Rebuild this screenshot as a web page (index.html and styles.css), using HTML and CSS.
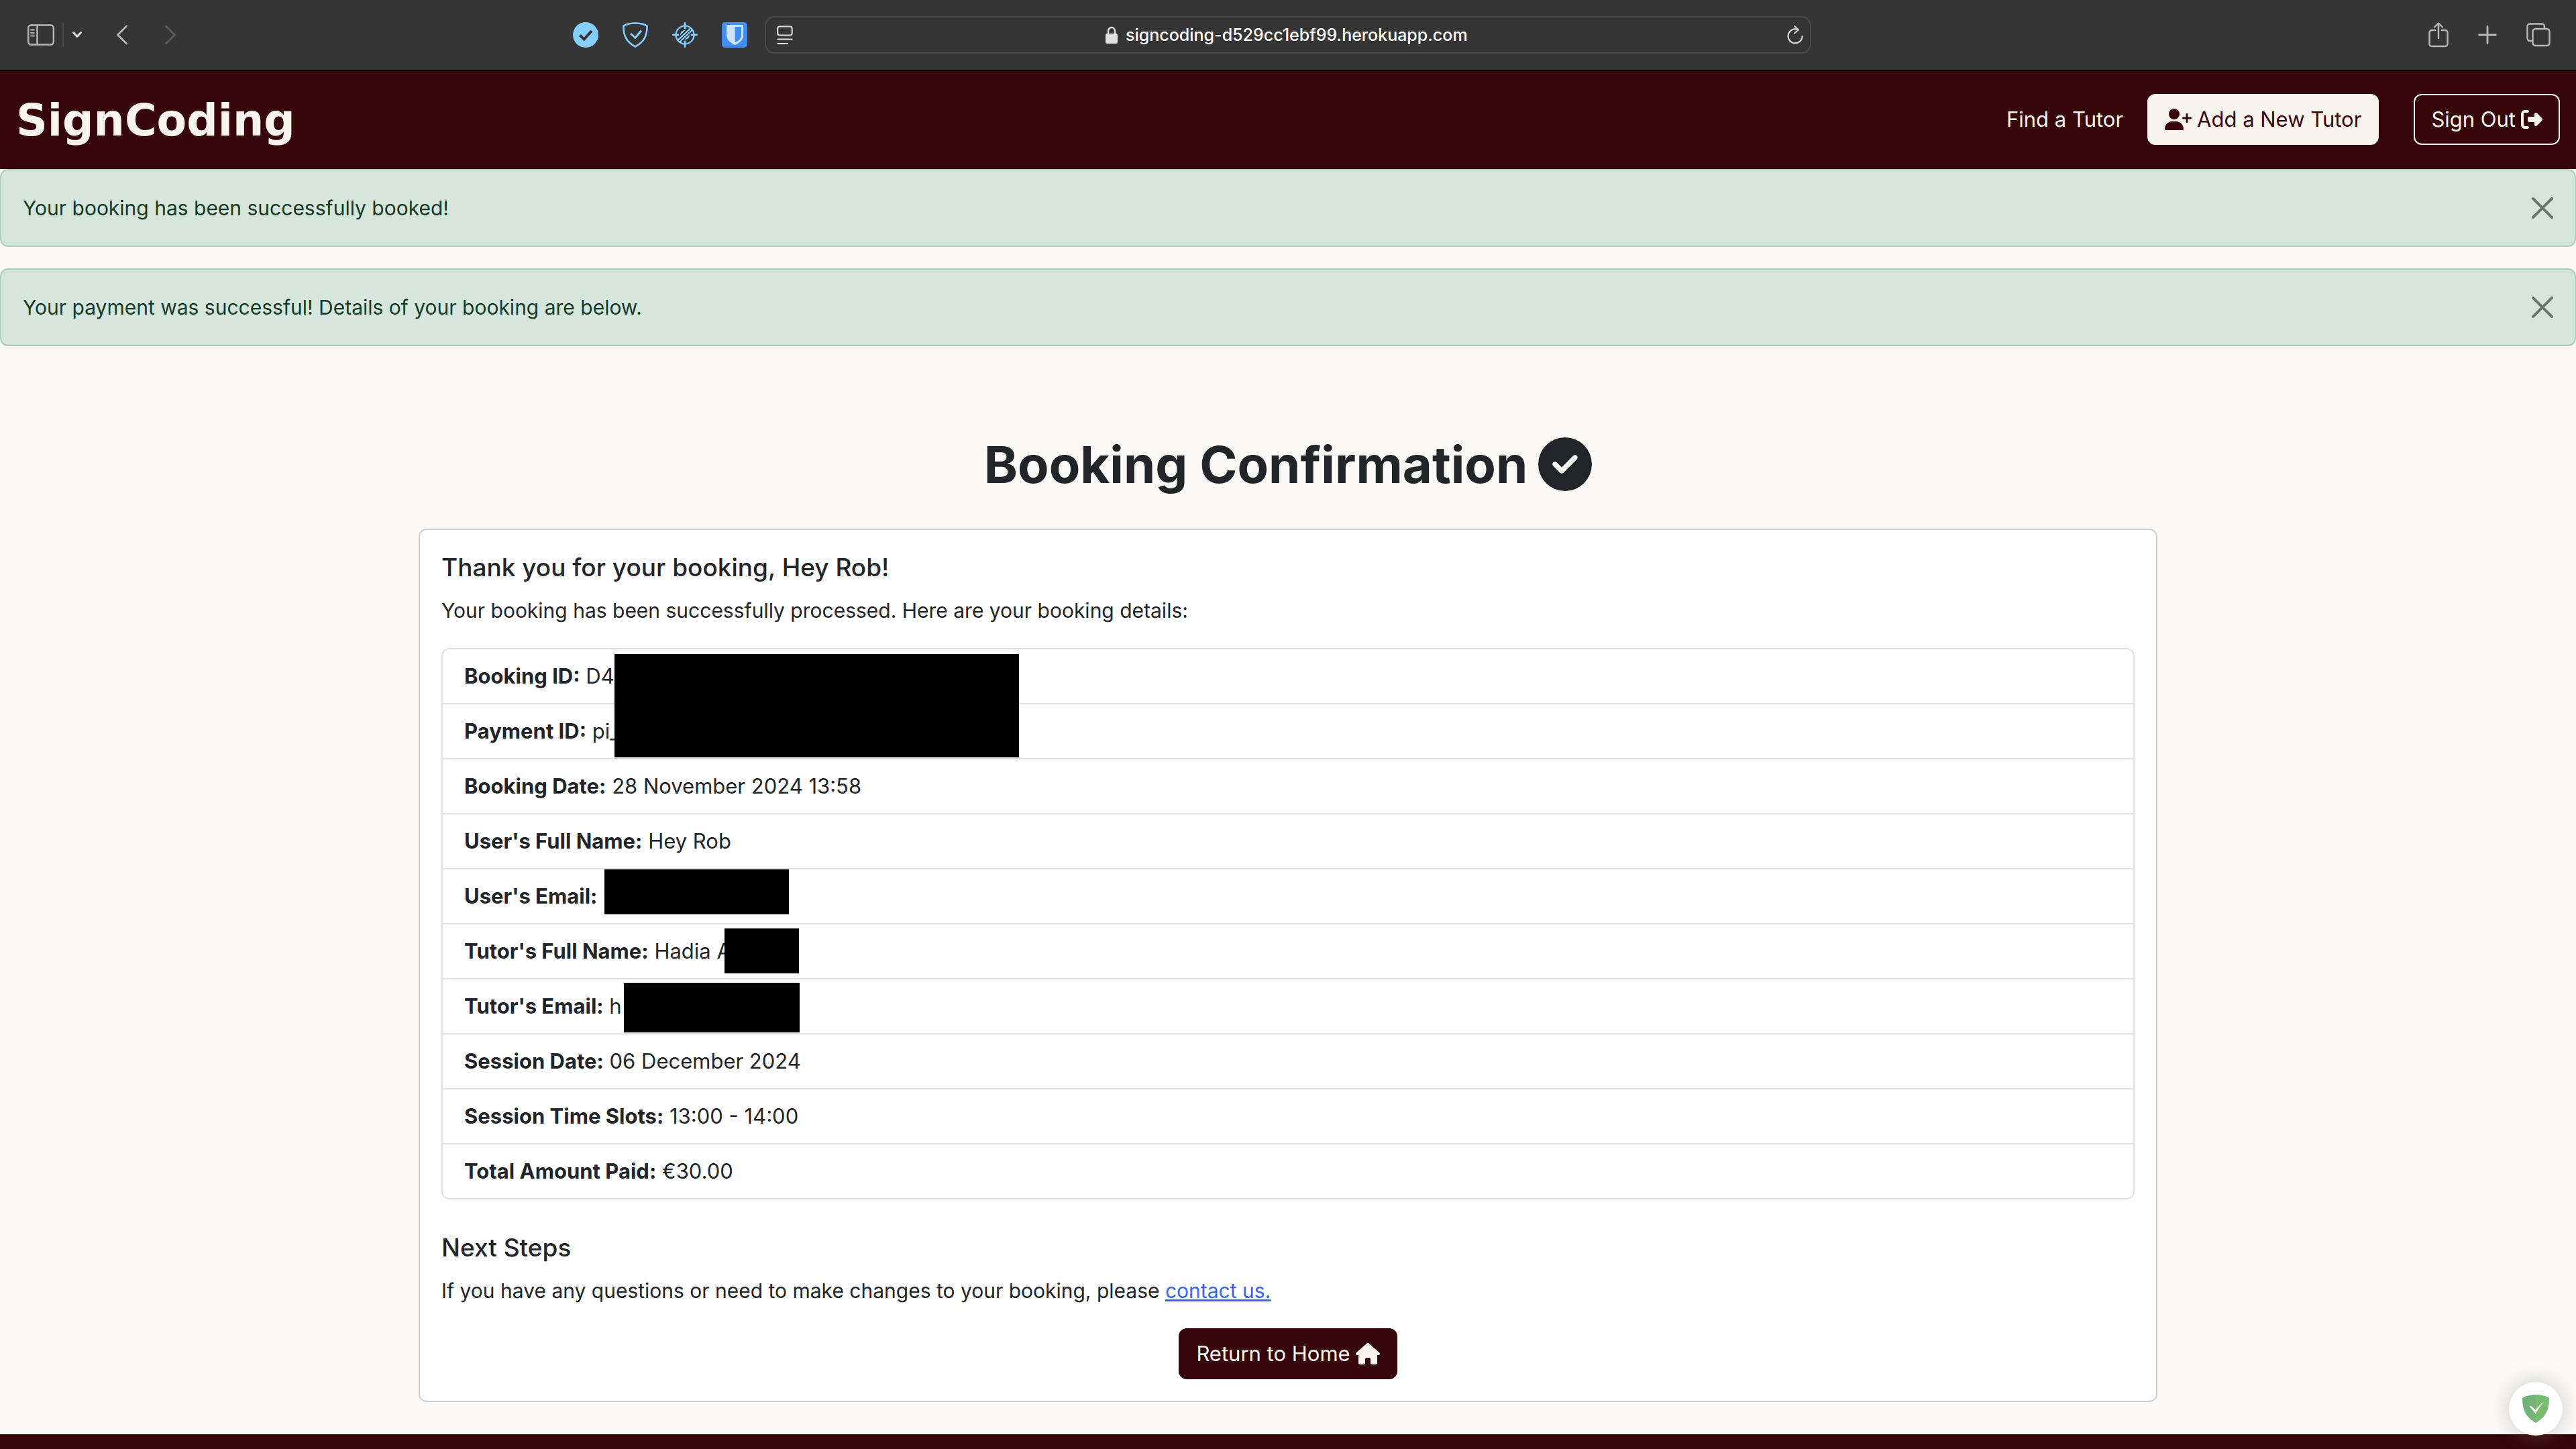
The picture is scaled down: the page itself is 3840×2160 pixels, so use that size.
FILE: index.html
```html
<!DOCTYPE html>
<html lang="en">
<head>
<meta charset="utf-8">
<meta name="viewport" content="width=device-width, initial-scale=1">
<title>SignCoding - Booking Confirmation</title>
<link rel="stylesheet" href="styles.css">
</head>
<body>
<div class="browser">
  <div class="browser-left">
    <div class="browser-nav">
      <button class="tool sidebar" aria-label="Show sidebar"><svg width="40" height="32" viewBox="0 0 40 32" fill="none" stroke="#b9b9b9" stroke-width="2.4"><rect x="1.2" y="1.5" width="37.6" height="29" rx="4"/><path d="M14.5 2v28"/><path d="M5 8.500h5M5 13h5M5 17.500h5" stroke-width="1.800" stroke-linecap="round"/></svg></button>
      <span class="divider"></span>
      <button class="tool menu" aria-label="Sidebar menu"><svg width="16" height="12" viewBox="0 0 16 12" fill="none" stroke="#e0e0e0" stroke-width="3" stroke-linecap="round" stroke-linejoin="round"><path d="M2.500 2.500L8 8.500l5.500-6"/></svg></button>
      <button class="tool back" aria-label="Back"><svg width="18" height="30" viewBox="0 0 18 30" fill="none" stroke="#b9b9b9" stroke-width="2.800" stroke-linecap="round" stroke-linejoin="round"><path d="M15.500 2L2.500 15l13 13"/></svg></button>
      <button class="tool forward" aria-label="Forward"><svg width="18" height="30" viewBox="0 0 18 30" fill="none" stroke="#5c5c5c" stroke-width="2.800" stroke-linecap="round" stroke-linejoin="round"><path d="M2.500 2l13 13-13 13"/></svg></button>
    </div>
    <div class="extensions">
      <button class="tool" aria-label="Verified"><svg width="38" height="38" viewBox="0 0 38 38"><circle cx="19" cy="19" r="19" fill="#84cfff"/><path d="M10.500 19.500l6.200 6L28 13" fill="none" stroke="#353535" stroke-width="4"/></svg></button>
      <button class="tool" aria-label="Ad blocker"><svg width="38" height="38" viewBox="0 0 38 38" fill="none" stroke="#84cfff" stroke-width="2.600" stroke-linejoin="round"><path d="M19 1.500C13 1.500 6 3 1.500 5.500 1 20 6 29.500 19 36.500 32 29.500 37 20 36.500 5.500 32 3 25 1.500 19 1.500z"/><path d="M12 17l7 6.500L28 12.500" stroke-width="3"/></svg></button>
      <button class="tool" aria-label="Element picker"><svg width="38" height="38" viewBox="0 0 38 38" fill="none" stroke="#84cfff" stroke-width="2.200" stroke-linecap="round"><circle cx="19" cy="19" r="13.500"/><path d="M19 1.500v7.500M19 29v7.500M1.500 19H9M29 19h7.500" stroke-width="2.800"/><path d="M9.500 26L27 9.500M12 29L29.500 12"/><path d="M12 19.500a7 7 0 0 1 7.500-7.500zM26 18.500a7 7 0 0 1-7.500 7.500z" fill="#84cfff" stroke="none"/></svg></button>
      <button class="tool" aria-label="Password manager"><svg width="38" height="38" viewBox="0 0 38 38"><rect width="38" height="38" rx="5" fill="#418ef0"/><path d="M7 4h25v15c0 7-5 11.500-12.500 15C12 30.500 7 26 7 19z" fill="#d0e3ff"/><path d="M19.500 7H29v12c0 5.500-3.500 8.500-9.500 11.500z" fill="#418ef0"/></svg></button>
    </div>
  </div>
  <div class="address">
    <button class="tool" aria-label="Page settings"><svg width="24" height="28" viewBox="0 0 24 28" fill="none" stroke="#e0e0e0" stroke-width="2" stroke-linecap="round"><rect x="1.200" y="1.500" width="21.500" height="13" rx="3"/><path d="M1.200 20.500h21.500M1.200 27h15"/></svg></button>
    <div class="url">
      <svg width="18" height="26" viewBox="0 0 18 26"><rect y="11" width="18" height="15" rx="2.500" fill="#e0e0e0"/><path d="M4 12V7.500a5 5.500 0 0 1 10 0V12" fill="none" stroke="#e0e0e0" stroke-width="2.400"/></svg>
      <input class="url-input" type="text" aria-label="Address" value="signcoding-d529cc1ebf99.herokuapp.com">
    </div>
    <button class="tool" aria-label="Reload"><svg width="24" height="28" viewBox="0 0 24 28" fill="none" stroke="#d5d5d5" stroke-width="2.200" stroke-linecap="round" stroke-linejoin="round"><path d="M16 6.200A10.500 10.500 0 1 0 22.500 16"/><path d="M11 1l6 5.500-6 5"/></svg></button>
  </div>
  <div class="browser-right">
    <button class="tool" aria-label="Share"><svg width="30" height="38" viewBox="0 0 30 38" fill="none" stroke="#b9b9b9" stroke-width="2.400" stroke-linecap="round" stroke-linejoin="round"><path d="M10 12H5a3.500 3.500 0 0 0-3.500 3.500v17A3.500 3.500 0 0 0 5 36h20a3.500 3.500 0 0 0 3.500-3.500v-17A3.500 3.500 0 0 0 25 12h-5M15 24V2M9 7.500L15 1.500l6 6"/></svg></button>
    <button class="tool" aria-label="New tab"><svg width="28" height="28" viewBox="0 0 28 28" stroke="#b9b9b9" stroke-width="2.800" stroke-linecap="round"><path d="M14 1.500v25M1.500 14h25"/></svg></button>
    <button class="tool" aria-label="Tab overview"><svg width="36" height="36" viewBox="0 0 36 36" fill="none" stroke="#b9b9b9" stroke-width="2.400"><rect x="9.500" y="9" width="25" height="25" rx="4"/><path d="M9 27H5.500a4 4 0 0 1-4-4V5.500a4 4 0 0 1 4-4H23a4 4 0 0 1 4 4V9"/></svg></button>
  </div>
</div>

<header class="site-header">
  <a class="brand" href="#">SignCoding</a>
  <nav class="site-nav">
    <a class="nav-link" href="#">Find a Tutor</a>
    <button class="btn btn-light"><svg width="40" height="32" viewBox="0 0 640 512" fill="currentColor"><path d="M96 128a128 128 0 1 1 256 0A128 128 0 1 1 96 128zM0 482.300C0 383.800 79.800 304 178.300 304l91.400 0C368.200 304 448 383.800 448 482.300c0 16.400-13.300 29.700-29.700 29.700L29.700 512C13.300 512 0 498.700 0 482.300zM504 312l0-64-64 0c-13.300 0-24-10.700-24-24s10.700-24 24-24l64 0 0-64c0-13.300 10.700-24 24-24s24 10.700 24 24l0 64 64 0c13.300 0 24 10.700 24 24s-10.700 24-24 24l-64 0 0 64c0 13.300-10.700 24-24 24s-24-10.700-24-24z"/></svg>Add a New Tutor</button>
    <button class="btn btn-outline">Sign Out<svg width="32" height="32" viewBox="0 0 512 512" fill="currentColor"><path d="M377.900 105.900L500.700 228.700c7.200 7.200 11.300 17.100 11.300 27.300s-4.100 20.100-11.300 27.300L377.900 406.100c-6.400 6.400-15 9.900-24 9.900c-18.700 0-33.900-15.200-33.900-33.900l0-62.100-128 0c-17.700 0-32-14.300-32-32l0-64c0-17.700 14.300-32 32-32l128 0 0-62.100c0-18.700 15.200-33.900 33.900-33.900c9 0 17.600 3.600 24 9.900zM160 96L96 96c-17.700 0-32 14.300-32 32l0 256c0 17.700 14.300 32 32 32l64 0c17.700 0 32 14.300 32 32s-14.300 32-32 32l-64 0c-53 0-96-43-96-96L0 128C0 75 43 32 96 32l64 0c17.700 0 32 14.300 32 32s-14.300 32-32 32z"/></svg></button>
  </nav>
</header>

<div class="alerts">
  <div class="alert" role="alert">
    <span>Your booking has been successfully booked!</span>
    <button class="close" aria-label="Close"><svg width="32" height="32" viewBox="0 0 16 16" fill="currentColor"><path d="M.293.293a1 1 0 0 1 1.414 0L8 6.586 14.293.293a1 1 0 1 1 1.414 1.414L9.414 8l6.293 6.293a1 1 0 0 1-1.414 1.414L8 9.414l-6.293 6.293a1 1 0 0 1-1.414-1.414L6.586 8 .293 1.707a1 1 0 0 1 0-1.414z"/></svg></button>
  </div>
  <div class="alert" role="alert">
    <span>Your payment was successful! Details of your booking are below.</span>
    <button class="close" aria-label="Close"><svg width="32" height="32" viewBox="0 0 16 16" fill="currentColor"><path d="M.293.293a1 1 0 0 1 1.414 0L8 6.586 14.293.293a1 1 0 1 1 1.414 1.414L9.414 8l6.293 6.293a1 1 0 0 1-1.414 1.414L8 9.414l-6.293 6.293a1 1 0 0 1-1.414-1.414L6.586 8 .293 1.707a1 1 0 0 1 0-1.414z"/></svg></button>
  </div>
</div>

<main class="main">
  <h1 class="title">Booking Confirmation<svg width="80" height="80" viewBox="0 0 512 512" fill="currentColor"><path d="M256 512A256 256 0 1 0 256 0a256 256 0 1 0 0 512zM369 209L241 337c-9.400 9.400-24.600 9.400-33.900 0l-64-64c-9.400-9.400-9.400-24.600 0-33.900s24.600-9.400 33.900 0l47 47L335 175c9.400-9.400 24.600-9.400 33.900 0s9.400 24.600 0 33.900z"/></svg></h1>
  <section class="card">
    <h2 class="subtitle">Thank you for your booking, Hey Rob!</h2>
    <p class="text">Your booking has been successfully processed. Here are your booking details:</p>
    <div class="details">
      <ul class="list">
        <li><strong>Booking ID:</strong> D4</li>
        <li><strong>Payment ID:</strong> pi_</li>
        <li><strong>Booking Date:</strong> 28 November 2024 13:58</li>
        <li><strong>User's Full Name:</strong> Hey Rob</li>
        <li><strong>User's Email:</strong></li>
        <li><strong>Tutor's Full Name:</strong> Hadia A</li>
        <li><strong>Tutor's Email:</strong> h</li>
        <li><strong>Session Date:</strong> 06 December 2024</li>
        <li><strong>Session Time Slots:</strong> 13:00 - 14:00</li>
        <li><strong>Total Amount Paid:</strong> €30.00</li>
      </ul>
      <span class="redact redact-ids"></span>
      <span class="redact redact-user-email"></span>
      <span class="redact redact-tutor-name"></span>
      <span class="redact redact-tutor-email"></span>
    </div>
    <h2 class="subtitle">Next Steps</h2>
    <p class="text">If you have any questions or need to make changes to your booking, please <a class="link" href="#">contact us.</a></p>
    <button class="btn btn-dark">Return to Home<svg width="36" height="32" viewBox="0 0 576 512" fill="currentColor"><path d="M575.800 255.500c0 18-15 32.100-32 32.100l-32 0 .7 160.200c0 2.700-.2 5.400-.5 8.100l0 16.200c0 22.100-17.900 40-40 40l-16 0c-1.100 0-2.200 0-3.300-.1c-1.400 .1-2.800 .1-4.200 .1L416 512l-24 0c-22.100 0-40-17.900-40-40l0-24 0-64c0-17.700-14.300-32-32-32l-64 0c-17.700 0-32 14.300-32 32l0 64 0 24c0 22.100-17.900 40-40 40l-24 0-31.900 0c-1.500 0-3-.1-4.500-.2c-1.200 .1-2.400 .2-3.600 .2l-16 0c-22.100 0-40-17.900-40-40l0-112c0-.9 0-1.900 .1-2.800l0-69.700-32 0c-18 0-32-14-32-32.100c0-9 3-17 10-24L266.400 8c7-7 15-8 22-8s15 2 21 7L564.800 231.500c8 7 12 15 11 24z"/></svg></button>
  </section>
</main>

<footer class="footer"></footer>

<button class="guard" aria-label="Protection status"><svg width="42" height="42" viewBox="0 0 42 42"><path d="M21 0C14 0 6 1.500 1 5c0 16 4 28 20 37z" fill="#74b27b"/><path d="M21 0c7 0 15 1.500 20 5 0 16-4 28-20 37z" fill="#78bc6f"/><path d="M11.500 17.500c2-1.500 3.500-.5 9 5.500C26 16 30 12.500 33 11c-5 5.500-8 10.500-12.500 17.500-3.500-5-6-8-9-11z" fill="#fff"/></svg></button>
</body>
</html>
```
FILE: styles.css
```css
* { box-sizing: border-box; }

body {
  margin: 0;
  min-height: 100vh;
  display: flex;
  flex-direction: column;
  background: #faf9f5;
  color: #212529;
  font-family: Inter, "Liberation Sans", sans-serif;
  font-size: 31px;
  line-height: 48px;
}

button, input { font: inherit; color: inherit; }
svg { display: block; flex: none; }

/* Browser toolbar */
.browser {
  display: grid;
  grid-template-columns: 1fr minmax(0, 1560px) 1fr;
  align-items: center;
  padding: 24px 0;
  background: #353535;
  border-bottom: 2px solid #0a0000;
}
.tool { padding: 0; border: 0; background: none; }
.browser-left, .browser-nav, .extensions, .browser-right, .address, .url {
  display: flex;
  align-items: center;
}
.browser-left { justify-content: space-between; padding: 0 26px 0 41px; }
.browser-nav { gap: 12px; }
.divider { width: 2px; height: 36px; background: #484848; }
.back { margin-left: 38px; }
.forward { margin-left: 42px; }
.extensions { gap: 36px; }
.address {
  justify-content: space-between;
  height: 56px;
  padding: 0 10px 0 16px;
  border: 2px solid #4b4b4b;
  border-radius: 14px;
}
.url { gap: 12px; }
.url-input {
  width: 520px;
  padding: 0;
  border: 0;
  background: none;
  color: #fff;
  font-size: 25px;
  font-weight: 500;
  line-height: 32px;
}
.browser-right { justify-content: flex-end; gap: 44px; padding-right: 38px; }

/* Site header */
.site-header {
  display: flex;
  justify-content: space-between;
  align-items: center;
  padding: 34px 24px 36px;
  background: #360609;
  color: #f9f5ee;
}
.brand {
  padding-top: 4px;
  color: inherit;
  font-family: "DejaVu Sans", sans-serif;
  font-size: 65px;
  font-weight: 700;
  line-height: 72px;
  text-decoration: none;
}
.site-nav { display: flex; align-items: center; }
.nav-link { margin-right: 36px; color: inherit; text-decoration: none; }
.btn {
  display: flex;
  align-items: center;
  gap: 8px;
  padding: 12px 24px;
  border: 2px solid #360609;
  border-radius: 12px;
  white-space: nowrap;
}
.btn-light { margin-right: 52px; background: #f9f5ee; border-color: #f9f5ee; color: #360609; }
.btn-outline { background: none; border-color: #f9f5ee; color: #f9f5ee; }
.btn-dark { margin: 0 auto; background: #360609; color: #f9f5ee; }

/* Alerts */
.alerts { display: flex; flex-direction: column; gap: 32px; }
.alert {
  display: flex;
  justify-content: space-between;
  align-items: center;
  padding: 32px;
  background: #d6e6dd;
  border: 2px solid #a9cfbb;
  border-radius: 12px;
  color: #163a26;
  font-size: 30px;
}
.close { padding: 0; border: 0; background: none; color: #6b736f; }

/* Booking card */
.main {
  width: 100%;
  max-width: 2640px;
  margin: 0 auto;
  padding: 128px 24px 48px;
}
.title {
  display: flex;
  justify-content: center;
  align-items: center;
  gap: 16px;
  margin: 0 0 48px;
  font-size: 76px;
  font-weight: 700;
  line-height: 96px;
}
.card {
  padding: 32px;
  background: #fff;
  border: 2px solid #d3d3d3;
  border-radius: 12px;
}
.subtitle { margin: 0 0 16px; font-size: 37px; font-weight: 500; line-height: 48px; }
.text { margin: 0 0 32px; font-size: 30px; }
.details { position: relative; margin-bottom: 48px; }
.list {
  margin: 0;
  padding: 0;
  list-style: none;
  border: 2px solid #dee2e6;
  border-radius: 12px;
}
.list li { padding: 16px 32px; border-bottom: 2px solid #dee2e6; }
.list li:last-child { border-bottom: 0; }
.list strong { font-weight: 700; }
.link { color: #3467f5; }

/* Blacked-out private details laid over the list */
.redact { position: absolute; background: #000; }
.redact-ids { left: 258px; top: 9px; width: 603px; height: 154px; }
.redact-user-email { left: 243px; top: 330px; width: 275px; height: 67px; }
.redact-tutor-name { left: 422px; top: 418px; width: 111px; height: 67px; }
.redact-tutor-email { left: 272px; top: 499px; width: 262px; height: 74px; }

.footer { flex: 1 0 auto; background: #360609; }

.guard {
  position: fixed;
  right: 20px;
  bottom: 20px;
  display: flex;
  align-items: center;
  justify-content: center;
  width: 80px;
  height: 80px;
  padding: 0;
  border: 0;
  border-radius: 50%;
  background: #fff;
  box-shadow: 0 0 28px rgba(128, 128, 128, 0.4);
}
```
